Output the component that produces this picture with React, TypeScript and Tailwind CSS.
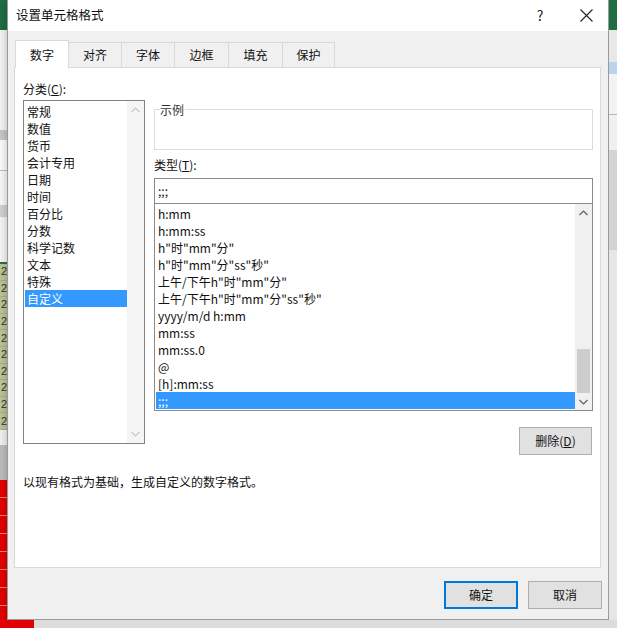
import React from "react";

function Chevron({ up, color }: { up?: boolean; color: string }) {
  return (
    <svg width="9" height="6" viewBox="0 0 9 6">
      <polyline
        points={up ? "0.5,5 4.5,1 8.5,5" : "0.5,1 4.5,5 8.5,1"}
        fill="none"
        stroke={color}
        strokeWidth="1.2"
      />
    </svg>
  );
}

function LeftStrip() {
  return (
    <div className="w-[7px] flex flex-col shrink-0 overflow-hidden">
      <div className="h-[30px] bg-[#1f6e43]" />
      <div className="h-[100px] bg-[#f3f3f3]" />
      <div className="h-[10px] bg-[#c6c6c6]" />
      <div className="h-[30px] bg-[#fafafa]" />
      <div className="h-[1px] bg-[#c0c0c0]" />
      <div className="h-[34px] bg-[#f7f7f7]" />
      <div className="h-[12px] bg-[#d0d0d0]" />
      <div className="h-[45px] bg-[#f5f5f5]" />
      <div className="h-[2px] bg-[#3a6a4a]" />
      <div className="h-[166px] bg-[#bcc39a] flex flex-col overflow-hidden">
        {Array.from({ length: 10 }).map((_, i) => (
          <div
            key={i}
            className="h-[16.6px] shrink-0 border-b border-[#a9b08a] flex items-center justify-end text-[11px] leading-none text-[#333] font-['Liberation_Sans',sans-serif]"
          >
            2
          </div>
        ))}
      </div>
      <div className="h-[15px] bg-[#f0f0f0]" />
      <div className="h-[35px] bg-[#bdbdbd]" />
      <div className="flex-1 bg-[#e20000] flex flex-col overflow-hidden">
        {Array.from({ length: 8 }).map((_, i) => (
          <div key={i} className="h-[18px] shrink-0 border-b border-[#f08080]" />
        ))}
      </div>
    </div>
  );
}

function RightStrip() {
  return (
    <div className="w-[8px] flex flex-col shrink-0">
      <div className="h-[30px] bg-[#1f6e43]" />
      <div className="h-[32px] bg-[#e8e8e8]" />
      <div className="h-[12px] bg-[#b8d4ee]" />
      <div className="h-[40px] bg-[#f2f2f2]" />
      <div className="h-[1px] bg-[#bbbbbb]" />
      <div className="h-[35px] bg-[#f0f0f0]" />
      <div className="h-[100px] bg-[#d3d3d3]" />
      <div className="flex-1 bg-[#e6e6e6]" />
    </div>
  );
}

const cats = ["常规", "数值", "货币", "会计专用", "日期", "时间", "百分比", "分数", "科学记数", "文本", "特殊", "自定义"];
const types = [
  "h:mm",
  "h:mm:ss",
  'h"时"mm"分"',
  'h"时"mm"分"ss"秒"',
  '上午/下午h"时"mm"分"',
  '上午/下午h"时"mm"分"ss"秒"',
  "yyyy/m/d h:mm",
  "mm:ss",
  "mm:ss.0",
  "@",
  "[h]:mm:ss",
  ";;;",
];

const tabs = [
  { t: "对齐", w: "w-[53px]" },
  { t: "字体", w: "w-[53px]" },
  { t: "边框", w: "w-[54px]" },
  { t: "填充", w: "w-[54px]" },
  { t: "保护", w: "w-[52px]" },
];

function Dialog() {
  return (
    <div className="w-[602px] shrink-0 flex flex-col bg-[#f0f0f0] border-x border-b border-[#9a9a9a] shadow-[0_2px_8px_rgba(0,0,0,0.25)]">
      {/* title bar */}
      <div className="h-[31px] bg-white flex items-center pl-[8px]">
        <span className="text-[12.5px]">设置单元格格式</span>
        <div className="ml-auto flex items-center">
          <div className="w-[48px] flex justify-center text-[14px] text-[#222]">?</div>
          <div className="w-[44px] flex justify-center">
            <svg width="13" height="13" viewBox="0 0 13 13">
              <path d="M0.5 0.5 L12.5 12.5 M12.5 0.5 L0.5 12.5" stroke="#222" strokeWidth="1.1" />
            </svg>
          </div>
        </div>
      </div>
      {/* tabs */}
      <div className="h-[36px] flex items-end pl-[7px] relative z-10">
        <div className="w-[54px] h-[28px] -mb-px bg-white border border-b-0 border-[#d9d9d9] flex items-center justify-center">
          数字
        </div>
        {tabs.map((t) => (
          <div
            key={t.t}
            className={`${t.w} h-[25px] border-t border-r border-[#d9d9d9] bg-[#f0f0f0] flex items-center justify-center`}
          >
            {t.t}
          </div>
        ))}
      </div>
      {/* panel */}
      <div className="ml-[6px] w-[587px] h-[501px] bg-white border border-[#d9d9d9] flex flex-col pl-[8px]">
        <div className="flex pt-[12px]">
          {/* left column */}
          <div className="w-[122px] flex flex-col">
            <div className="h-[17px] leading-[17px]">
              分类(<span className="underline">C</span>):
            </div>
            <div className="mt-[3px] h-[344px] border border-[#828282] flex">
              <div className="flex-1 pt-[2px] pl-[1px]">
                {cats.map((c, i) => (
                  <div
                    key={c}
                    className={`h-[17px] leading-[17px] pl-[2px] ${i === cats.length - 1 ? "bg-[#3399ff] text-white" : ""}`}
                  >
                    {c}
                  </div>
                ))}
              </div>
              <div className="w-[17px] bg-[#f5f5f5] flex flex-col justify-between items-center py-[6px]">
                <Chevron up color="#c8c8c8" />
                <Chevron color="#c8c8c8" />
              </div>
            </div>
          </div>
          {/* right column */}
          <div className="ml-[9px] w-[439px] flex flex-col">
            <div className="mt-[29px] h-[41px] border border-[#dcdcdc] relative">
              <span className="absolute -top-[9px] left-[5px] bg-white pr-[1px] h-[17px] leading-[17px] text-[#333]">
                示例
              </span>
            </div>
            <div className="mt-[6px] h-[17px] leading-[17px]">
              类型(<span className="underline">T</span>):
            </div>
            <div className="mt-[5px] h-[26px] border border-[#8a8a8a] flex items-center pl-[3px]">;;;</div>
            <div className="h-[207px] border border-t-0 border-[#8a8a8a] flex">
              <div className="flex-1 pt-[1px] pl-[1px]">
                {types.map((t, i) => (
                  <div
                    key={t}
                    className={`h-[17px] leading-[17px] pl-[2px] ${i === types.length - 1 ? "bg-[#3399ff] text-white" : ""}`}
                  >
                    {t}
                  </div>
                ))}
              </div>
              <div className="w-[17px] bg-[#f0f0f0] flex flex-col items-center">
                <div className="h-[17px] flex items-center justify-center">
                  <Chevron up color="#606060" />
                </div>
                <div className="h-[128px]" />
                <div className="w-[13px] h-[44px] bg-[#cdcdcd]" />
                <div className="flex-1 flex items-center justify-center">
                  <Chevron color="#606060" />
                </div>
              </div>
            </div>
            <div className="mt-[16px] self-end mr-[1px] w-[73px] h-[28px] bg-[#e1e1e1] border border-[#adadad] flex items-center justify-center">
              删除(<span className="underline">D</span>)
            </div>
          </div>
        </div>
        <div className="mt-[18px] h-[17px] leading-[17px]">以现有格式为基础，生成自定义的数字格式。</div>
      </div>
      {/* buttons */}
      <div className="mt-[13px] flex justify-end gap-[10px] mr-[6px]">
        <div className="w-[74px] h-[28px] bg-[#e1e1e1] border-2 border-[#0078d7] flex items-center justify-center">
          确定
        </div>
        <div className="w-[74px] h-[28px] bg-[#e1e1e1] border border-[#adadad] flex items-center justify-center">
          取消
        </div>
      </div>
    </div>
  );
}

export default function App() {
  return (
    <div className="w-[617px] h-[628px] flex flex-col overflow-hidden bg-[#e6e6e6] text-[12px] text-[#111] font-['Microsoft_YaHei','Noto_Sans_CJK_SC',sans-serif]">
      <div className="flex h-[620px]">
        <LeftStrip />
        <Dialog />
        <RightStrip />
      </div>
      <div className="flex h-[8px]">
        <div className="w-[34px] bg-[#e20000]" />
        <div className="flex-1 bg-[#dcdcdc]" />
      </div>
    </div>
  );
}
